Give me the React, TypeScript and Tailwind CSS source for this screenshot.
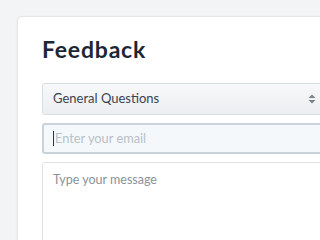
import React from 'react';

export default function App() {
  return (
    <div className="w-[320px] h-[240px] overflow-hidden bg-[#f3f4f5] pl-[17px] pt-[16px]" style={{ fontFamily: 'Lato, "Open Sans", sans-serif' }}>
      <div className="w-[420px] h-[300px] bg-white rounded-[5px] border border-[#e3e5e8] shadow-[0_1px_3px_rgba(0,0,0,0.06)] pl-[24px] pt-[17px]">
        <h1 className="text-[23px] font-bold text-[#1c2733] leading-[30px] tracking-[0.8px]">Feedback</h1>
        <div className="mt-[19px] w-[360px] flex flex-col">
          <div className="h-[32px] rounded-[3px] border border-[#dadde2] bg-gradient-to-b from-[#f7f8f9] to-[#eceef1] flex items-center justify-between pl-[10px] pr-[85px]">
            <span className="text-[13px] text-[#3b4350]">General Questions</span>
            <svg width="8" height="10" viewBox="0 0 8 10" className="text-[#7a828c]">
              <path d="M4 0.5 L7.5 4 H0.5 Z" fill="currentColor" />
              <path d="M4 9.5 L7.5 6 H0.5 Z" fill="currentColor" />
            </svg>
          </div>
          <div className="mt-[8px] h-[31px] rounded-[3px] border-2 border-[#c9d2db] bg-[#f5f8fb] flex items-center pl-[9px]">
            <span className="w-px h-[15px] bg-[#2b3440] mr-[1px]" />
            <span className="text-[12.8px] text-[#b9c0c7]">Enter your email</span>
          </div>
          <div className="mt-[8px] h-[120px] rounded-[3px] border border-[#dfe3e8] bg-white pl-[10px] pt-[3px]">
            <span className="text-[12.5px] text-[#8a929b]">Type your message</span>
          </div>
        </div>
      </div>
    </div>
  );
}
